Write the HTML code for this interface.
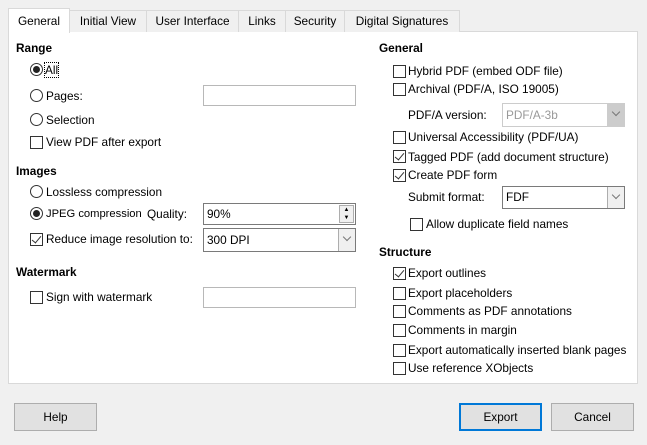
<!DOCTYPE html>
<html><head><meta charset="utf-8"><style>
*{box-sizing:border-box;margin:0;padding:0}
body{width:647px;height:445px;background:#f0f0f0;font-family:"Liberation Sans",sans-serif;font-size:11.8px;color:#000;position:relative;overflow:hidden}
.a{position:absolute;white-space:nowrap;line-height:14px}
.b{font-weight:bold}
.cb{position:absolute;width:13px;height:13px;border:1px solid #333;background:#fff}
.cb.k::after{content:"";position:absolute;left:3px;top:0px;width:4px;height:8px;border:solid #333;border-width:0 1px 1px 0;transform:rotate(40deg)}
.rb{position:absolute;width:13px;height:13px;border:1px solid #333;border-radius:50%;background:#fff}
.rb.k::after{content:"";position:absolute;left:2px;top:2px;width:7px;height:7px;border-radius:50%;background:#222}
.in{position:absolute;border:1px solid #b8b8b8;background:#fff;padding-left:3px;line-height:19px}
.dd{position:absolute;border:1px solid #7a7a7a;background:#fff;padding-left:3px}
.dd .ar{position:absolute;right:0;top:0;bottom:0;width:17px;background:#f0f0f0;border-left:1px solid #adadad}
.dd .ar::after{content:"";position:absolute;left:5px;top:5px;width:5px;height:5px;border:solid #777;border-width:0 1px 1px 0;transform:rotate(45deg)}
.tab{position:absolute;top:10px;height:22px;border:1px solid #d9d9d9;border-bottom:none;background:#f0f0f0;text-align:center;line-height:20px}
.btn{position:absolute;top:403px;height:28px;border:1px solid #adadad;background:#e1e1e1;text-align:center;line-height:26px}
</style></head><body>
<div style="position:absolute;left:8px;top:31px;width:630px;height:353px;background:#fff;border:1px solid #d9d9d9"></div>
<div class="tab" style="left:69px;width:78px">Initial View</div>
<div class="tab" style="left:146px;width:93px">User Interface</div>
<div class="tab" style="left:238px;width:48px">Links</div>
<div class="tab" style="left:285px;width:60px">Security</div>
<div class="tab" style="left:344px;width:116px">Digital Signatures</div>
<div class="tab" style="left:8px;top:8px;width:62px;height:25px;background:#fff;line-height:24px">General</div>

<div class="a b" style="left:16px;top:41px">Range</div>
<div class="rb k" style="left:30px;top:63px"></div><div class="a" style="left:45px;top:63px;outline:1px dotted #000">All</div>
<div class="rb" style="left:30px;top:89px"></div><div class="a" style="left:46px;top:89px">Pages:</div>
<div class="in" style="left:203px;top:85px;width:153px;height:21px"></div>
<div class="rb" style="left:30px;top:113px"></div><div class="a" style="left:46px;top:113px">Selection</div>
<div class="cb" style="left:30px;top:136px"></div><div class="a" style="left:46px;top:135px">View PDF after export</div>

<div class="a b" style="left:16px;top:164px">Images</div>
<div class="rb" style="left:30px;top:185px"></div><div class="a" style="left:46px;top:185px">Lossless compression</div>
<div class="rb k" style="left:30px;top:207px"></div><div class="a" style="left:46px;top:207px;font-size:11.2px">JPEG compression</div>
<div class="a" style="left:147px;top:207px">Quality:</div>
<div class="dd" style="left:203px;top:203px;width:153px;height:22px;line-height:20px">90%<div style="position:absolute;right:1px;top:1px;width:15px;height:18px;background:#f0f0f0;border:1px solid #adadad;font-size:6px;line-height:8px;text-align:center">▲<br>▼</div></div>
<div class="cb k" style="left:30px;top:233px"></div><div class="a" style="left:46px;top:232px">Reduce image resolution to:</div>
<div class="dd" style="left:203px;top:228px;width:153px;height:24px;line-height:22px">300 DPI<div class="ar"></div></div>

<div class="a b" style="left:16px;top:265px">Watermark</div>
<div class="cb" style="left:30px;top:291px"></div><div class="a" style="left:46px;top:290px">Sign with watermark</div>
<div class="in" style="left:203px;top:287px;width:153px;height:21px"></div>

<div class="a b" style="left:379px;top:41px">General</div>
<div class="cb" style="left:393px;top:65px"></div><div class="a" style="left:408px;top:64px">Hybrid PDF (embed ODF file)</div>
<div class="cb" style="left:393px;top:83px"></div><div class="a" style="left:408px;top:82px">Archival (PDF/A, ISO 19005)</div>
<div class="a" style="left:408px;top:108px">PDF/A version:</div>
<div class="dd" style="left:502px;top:103px;width:123px;height:24px;line-height:22px;color:#999;border-color:#ccc">PDF/A-3b<div class="ar" style="background:#ccc;border-left-color:#ccc"></div></div>
<div class="cb" style="left:393px;top:131px"></div><div class="a" style="left:408px;top:130px">Universal Accessibility (PDF/UA)</div>
<div class="cb k" style="left:393px;top:150px"></div><div class="a" style="left:408px;top:150px">Tagged PDF (add document structure)</div>
<div class="cb k" style="left:393px;top:169px"></div><div class="a" style="left:408px;top:168px">Create PDF form</div>
<div class="a" style="left:408px;top:190px">Submit format:</div>
<div class="dd" style="left:502px;top:186px;width:123px;height:23px;line-height:21px">FDF<div class="ar"></div></div>
<div class="cb" style="left:410px;top:218px"></div><div class="a" style="left:426px;top:217px">Allow duplicate field names</div>

<div class="a b" style="left:379px;top:245px">Structure</div>
<div class="cb k" style="left:393px;top:267px"></div><div class="a" style="left:408px;top:266px">Export outlines</div>
<div class="cb" style="left:393px;top:287px"></div><div class="a" style="left:408px;top:286px">Export placeholders</div>
<div class="cb" style="left:393px;top:305px"></div><div class="a" style="left:408px;top:304px">Comments as PDF annotations</div>
<div class="cb" style="left:393px;top:324px"></div><div class="a" style="left:408px;top:323px">Comments in margin</div>
<div class="cb" style="left:393px;top:344px"></div><div class="a" style="left:408px;top:343px">Export automatically inserted blank pages</div>
<div class="cb" style="left:393px;top:362px"></div><div class="a" style="left:408px;top:361px">Use reference XObjects</div>

<div class="btn" style="left:14px;width:83px">Help</div>
<div class="btn" style="left:459px;width:83px;border:2px solid #0078d7;line-height:24px">Export</div>
<div class="btn" style="left:551px;width:83px">Cancel</div>
</body></html>
